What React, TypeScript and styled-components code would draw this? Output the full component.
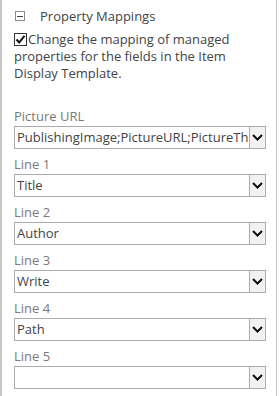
import React from 'react';
import styled, { createGlobalStyle } from 'styled-components';

const GlobalStyle = createGlobalStyle`
  html, body {
    margin: 0;
    padding: 0;
    background: #fff;
  }
  body {
    font-family: 'Open Sans', 'Noto Sans', 'Liberation Sans', sans-serif;
  }
`;

const Panel = styled.div`
  position: relative;
  box-sizing: border-box;
  width: 277px;
  height: 396px;
  border-left: 2px solid #c6c6c6;
  border-right: 1px solid #c6c6c6;
  padding: 6px 0 0 12px;
  overflow: hidden;

  /* highlighted edge at the top of the pane */
  &::before {
    content: '';
    position: absolute;
    left: -2px;
    top: 0;
    width: 2px;
    height: 112px;
    background: #a9c8e6;
  }
`;

const Header = styled.div`
  display: flex;
  align-items: center;
  gap: 15px;
  height: 20px;
  padding-left: 1px;
  font-size: 13px;
  color: #444;
`;

const Collapse = styled.span`
  box-sizing: border-box;
  width: 10px;
  height: 10px;
  border: 1px solid #8a8a8a;
  display: flex;
  align-items: center;
  justify-content: center;

  &::after {
    content: '';
    width: 6px;
    height: 1px;
    background: #444;
  }
`;

const Description = styled.p`
  margin: 5px 0 0;
  width: 250px;
  font-size: 13px;
  line-height: 17px;
  color: #444;
`;

const CheckBox = styled.svg`
  vertical-align: -2px;
  margin-right: 1px;
`;

const Fields = styled.div`
  margin-top: 24px;
  display: flex;
  flex-direction: column;
  gap: 5px;
`;

const Field = styled.div`
  display: flex;
  flex-direction: column;
`;

const Label = styled.label`
  font-size: 13px;
  line-height: 20px;
  color: #7a7a7a;
`;

const Select = styled.div`
  display: flex;
  width: 252px;
  height: 23px;
`;

const Value = styled.div`
  box-sizing: border-box;
  flex: 1;
  min-width: 0;
  border: 1px solid #ababab;
  border-right: none;
  padding: 0 2px;
  font-size: 13px;
  line-height: 21px;
  color: #444;
  white-space: nowrap;
  overflow: hidden;
`;

const Arrow = styled.div`
  box-sizing: border-box;
  width: 17px;
  border: 1px solid #ababab;
  background: #f2f2f2;
  display: flex;
  align-items: center;
  justify-content: center;
`;

const fields = [
  { label: 'Picture URL', value: 'PublishingImage;PictureURL;PictureTh' },
  { label: 'Line 1', value: 'Title' },
  { label: 'Line 2', value: 'Author' },
  { label: 'Line 3', value: 'Write' },
  { label: 'Line 4', value: 'Path' },
  { label: 'Line 5', value: '' },
];

const Chevron = () => (
  <svg width="11" height="7" viewBox="0 0 11 7">
    <path d="M1 1 L5.5 5.5 L10 1" fill="none" stroke="#111" strokeWidth="2" />
  </svg>
);

export default function App() {
  return (
    <>
      <GlobalStyle />
      <Panel>
        <Header>
          <Collapse />
          <span>Property Mappings</span>
        </Header>
        <Description>
          <CheckBox width="13" height="13" viewBox="0 0 13 13">
            <rect x="0.5" y="0.5" width="12" height="12" fill="#fff" stroke="#333" />
            <path d="M2.5 6.5 L5.2 9.5 L10.5 2.8" fill="none" stroke="#111" strokeWidth="2" />
          </CheckBox>
          Change the mapping of managed properties for the fields in the Item Display Template.
        </Description>
        <Fields>
          {fields.map((f) => (
            <Field key={f.label}>
              <Label>{f.label}</Label>
              <Select>
                <Value>{f.value}</Value>
                <Arrow>
                  <Chevron />
                </Arrow>
              </Select>
            </Field>
          ))}
        </Fields>
      </Panel>
    </>
  );
}
